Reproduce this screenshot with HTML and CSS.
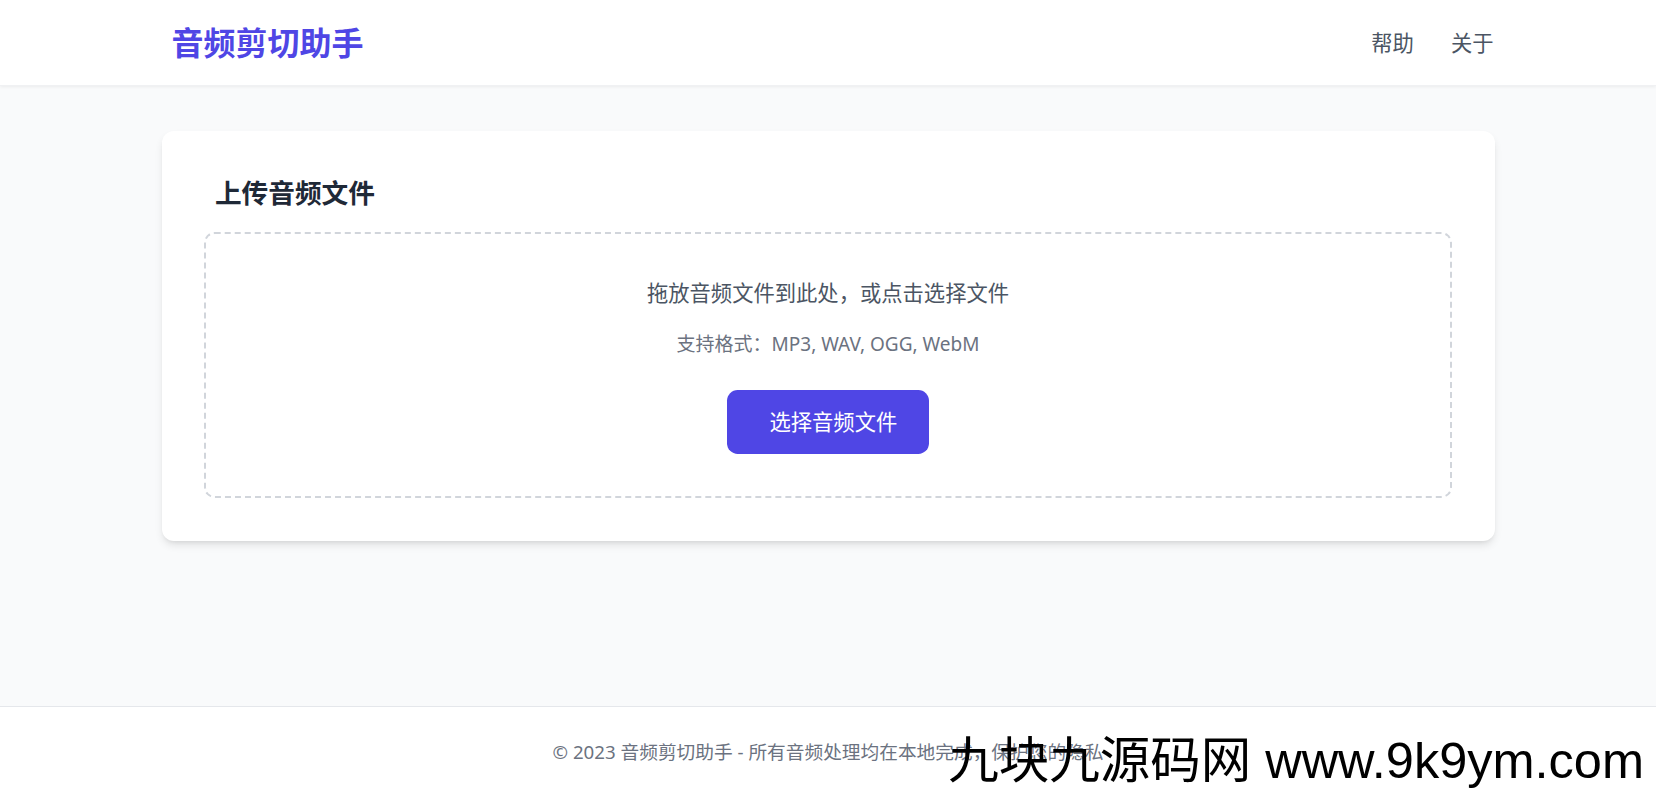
FILE: index.html
```html
<!DOCTYPE html>
<html lang="zh-CN">

<head>
    <meta charset="UTF-8">
    <meta name="viewport" content="width=device-width, initial-scale=1.0">
    <title>音频剪切助手</title>
    <link rel="stylesheet" href="styles.css">
</head>

<body>
    <header class="site-header">
        <div class="header-inner">
            <a href="#" class="logo">音频剪切助手</a>
            <nav class="nav">
                <a href="#">帮助</a>
                <a href="#">关于</a>
            </nav>
        </div>
    </header>

    <main class="main">
        <section class="card">
            <h2 class="card-title">上传音频文件</h2>
            <div class="drop-zone" id="dropZone">
                <p class="drop-text">拖放音频文件到此处，或点击选择文件</p>
                <p class="drop-hint">支持格式：MP3, WAV, OGG, WebM</p>
                <button class="btn-select" id="selectBtn">选择音频文件</button>
            </div>
        </section>
    </main>

    <footer class="site-footer">
        <p>© 2023 音频剪切助手 - 所有音频处理均在本地完成，保护您的隐私</p>
    </footer>

    <div class="watermark">九块九源码网 www.9k9ym.com</div>
</body>

</html>
```

FILE: styles.css
```css
body {
    margin: 0;
    min-height: 100vh;
    display: flex;
    flex-direction: column;
    background-color: #f9fafb;
    font-family: "Noto Sans", "Noto Sans CJK SC", sans-serif;
    color: #1f2937;
}

a {
    text-decoration: none;
}

/* 顶部导航 */
.site-header {
    background-color: #fff;
    box-shadow: 0 1px 3px rgba(0, 0, 0, 0.06);
    border-bottom: 1px solid #f0f1f3;
}

.header-inner {
    max-width: 1365px;
    margin: 0 auto;
    padding: 21px 17px 21px 26px;
    box-sizing: border-box;
    display: flex;
    justify-content: space-between;
    align-items: center;
}

.logo {
    font-size: 32px;
    line-height: 43px;
    font-weight: 700;
    color: #4f46e5;
}

.nav {
    display: flex;
    gap: 37px;
}

.nav a {
    font-size: 21.3px;
    line-height: 32px;
    color: #4b5563;
}

/* 主体 */
.main {
    flex: 1;
    padding-top: 45px;
}

.card {
    width: 1333px;
    margin: 0 auto;
    padding: 42.7px;
    box-sizing: border-box;
    background-color: #fff;
    border-radius: 12px;
    box-shadow: 0 5px 8px -1px rgba(0, 0, 0, 0.1), 0 3px 5px -3px rgba(0, 0, 0, 0.1);
}

.card-title {
    margin: 0 0 21.3px;
    padding-left: 10.7px;
    font-size: 26.7px;
    line-height: 37.3px;
    font-weight: 600;
    color: #1f2937;
}

.drop-zone {
    border: 2.67px dashed #d1d5db;
    border-radius: 10.7px;
    padding: 42.7px;
    text-align: center;
}

.drop-text {
    margin: 0 0 22px;
    font-size: 21.3px;
    line-height: 32px;
    color: #4b5563;
}

.drop-hint {
    margin: 0 0 32px;
    font-size: 19px;
    line-height: 26.7px;
    color: #6b7280;
}

.btn-select {
    padding: 16px 32px 16px 42.7px;
    border: none;
    border-radius: 10.7px;
    background-color: #4f46e5;
    color: #fff;
    font-family: inherit;
    font-size: 21.3px;
    line-height: 32px;
    cursor: pointer;
}

/* 页脚 */
.site-footer {
    background-color: #fff;
    border-top: 1.33px solid #e5e7eb;
    padding: 32px 0;
    text-align: center;
}

.site-footer p {
    margin: 0;
    font-size: 18.7px;
    line-height: 26.7px;
    color: #6b7280;
}

/* 水印 */
.watermark {
    position: absolute;
    right: 12px;
    bottom: 12px;
    font-family: "Liberation Sans", "Noto Sans CJK SC", sans-serif;
    font-size: 50.5px;
    line-height: 50px;
    color: #000;
    white-space: nowrap;
}
```
